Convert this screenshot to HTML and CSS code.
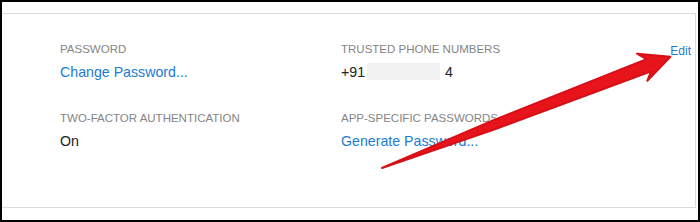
FILE: index.html
```html
<!DOCTYPE html>
<html lang="en">
<head>
  <meta charset="UTF-8">
  <meta name="viewport" content="width=device-width, initial-scale=1.0">
  <link rel="stylesheet" href="styles.css">
</head>
<body>
<div class="frame">
  <div class="card">
    <div class="grid">
      <div class="item">
        <div class="label-row"><span class="label">PASSWORD</span></div>
        <div class="value link">Change Password...</div>
      </div>
      <div class="item">
        <div class="label-row">
          <span class="label">TRUSTED PHONE NUMBERS</span>
          <span class="edit">Edit</span>
        </div>
        <div class="value">+91<span class="redacted"></span>4</div>
      </div>
      <div class="item">
        <div class="label-row"><span class="label">TWO-FACTOR AUTHENTICATION</span></div>
        <div class="value">On</div>
      </div>
      <div class="item">
        <div class="label-row"><span class="label">APP-SPECIFIC PASSWORDS</span></div>
        <div class="value link">Generate Password...</div>
      </div>
    </div>
  </div>
  <!-- red annotation arrow drawn over the page -->
  <svg class="arrow" width="700" height="222" viewBox="0 0 700 222">
    <g transform="translate(382 168) rotate(-21.08)">
      <polygon points="0,0 120,-4.5 286,-6.5 279,-15 309,0 279,14 286,6.5 120,4.5"
               fill="#e8141b" stroke="#d80f16" stroke-width="2" stroke-linejoin="round"/>
    </g>
  </svg>
</div>
</body>
</html>
```

FILE: styles.css
```css
body {
  margin: 0;
  background-color: #fff;
  font-family: "Liberation Sans", Arial, sans-serif;
}

.frame {
  position: relative;
  width: 700px;
  height: 222px;
  box-sizing: border-box;
  border: 2px solid #000;
  padding: 11px 2px 12px 0;
  display: flex;
  flex-direction: column;
  background-color: #fff;
}

.card {
  flex: 1;
  border: 1px solid #dcdcdc;
  border-left: none;
  padding: 28px 4px 0 58px;
}

.grid {
  display: grid;
  grid-template-columns: 281px 1fr;
  row-gap: 30px;
}

.label-row {
  display: flex;
  justify-content: space-between;
  align-items: flex-start;
  height: 14px;
}

.label {
  font-size: 11.5px;
  line-height: 14px;
  color: #858585;
}

.edit {
  font-size: 12px;
  line-height: 14px;
  margin-top: 2px;
  color: #1b7bd3;
}

.value {
  margin-top: 7px;
  font-size: 14.2px;
  line-height: 18px;
  color: #222;
}

.link {
  color: #1b7bd3;
}

.redacted {
  display: inline-block;
  vertical-align: top;
  width: 73px;
  height: 17px;
  margin: 0 5px 0 2px;
  background-color: #f2f2f2;
}

.arrow {
  position: absolute;
  left: -2px;
  top: -2px;
  pointer-events: none;
}
```
